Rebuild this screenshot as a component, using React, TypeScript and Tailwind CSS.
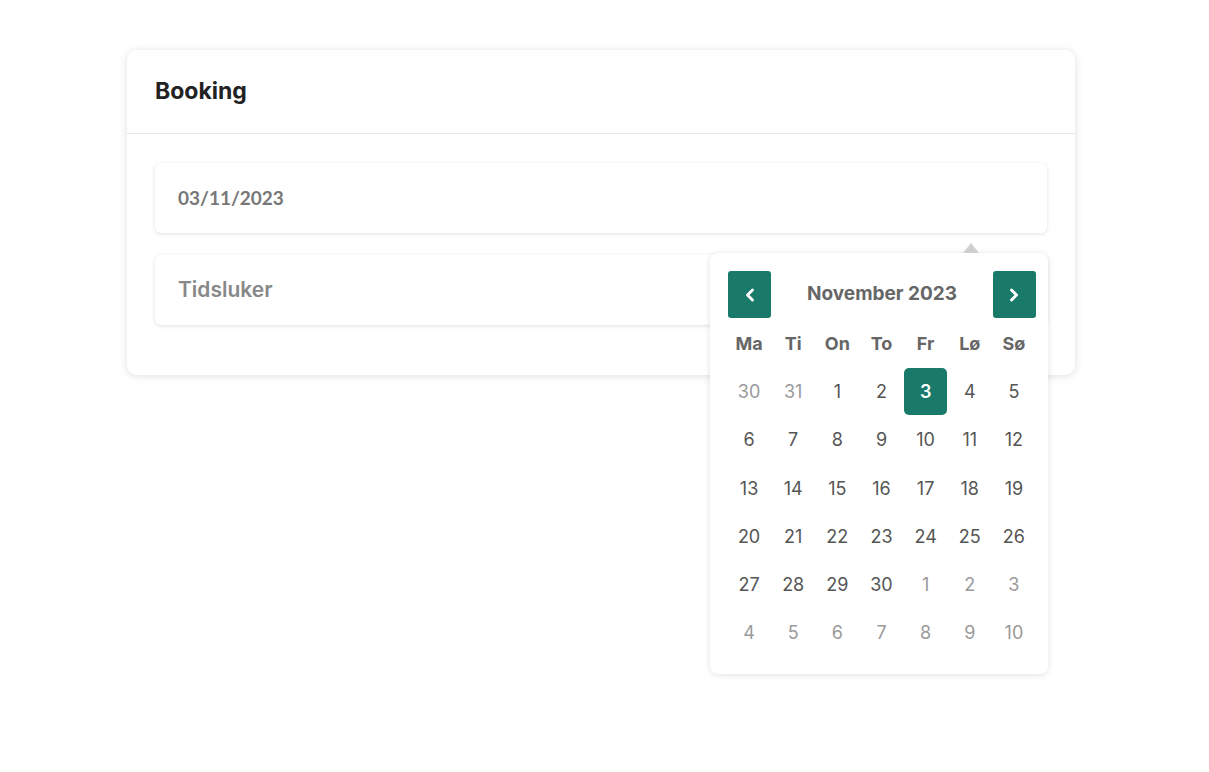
import { ChevronLeft, ChevronRight } from 'lucide-react';

const weekdays = ['Ma', 'Ti', 'On', 'To', 'Fr', 'Lø', 'Sø'];

// 6 weeks shown, first two + last eleven belong to other months
const days: { n: number; muted: boolean }[] = [
  ...[30, 31].map((n) => ({ n, muted: true })),
  ...Array.from({ length: 30 }, (_, i) => ({ n: i + 1, muted: false })),
  ...Array.from({ length: 10 }, (_, i) => ({ n: i + 1, muted: true })),
];

const DatePicker = () => (
  <div className="absolute left-[583px] top-[203px] w-[338px] rounded-lg bg-white pl-[17px] pr-[12px] pt-[18px] pb-[17px] shadow-[0_1px_6px_rgba(0,0,0,0.12)]">
    {/* little arrow pointing at the input */}
    <div className="absolute -top-[10px] left-[253px] h-0 w-0 border-x-[8px] border-b-[10px] border-x-transparent border-b-[#cfcfcf]" />

    <div className="flex items-center justify-between pl-px">
      <button className="flex h-[47px] w-[43px] items-center justify-center rounded-[3px] bg-[#197a69] text-white">
        <ChevronLeft size={20} strokeWidth={3.5} />
      </button>
      <span className="text-[19px] font-bold text-[#666]">November 2023</span>
      <button className="flex h-[47px] w-[43px] items-center justify-center rounded-[3px] bg-[#197a69] text-white">
        <ChevronRight size={20} strokeWidth={3.5} />
      </button>
    </div>

    <div className="grid grid-cols-7 auto-rows-[48.3px] mt-px">
      {weekdays.map((d) => (
        <div key={d} className="flex items-center justify-center text-[18px] font-bold text-[#666]">
          {d}
        </div>
      ))}
      {days.map((d, i) => {
        const selected = !d.muted && d.n === 3;
        return (
          <div key={i} className="flex items-center justify-center">
            <div
              className={
                selected
                  ? 'flex h-[47px] w-[43px] items-center justify-center rounded-[5px] bg-[#197a69] text-[18px] font-semibold text-white'
                  : `flex h-[47px] w-[43px] items-center justify-center text-[18px] ${d.muted ? 'text-[#9a9a9a]' : 'text-[#555]'}`
              }
            >
              {d.n}
            </div>
          </div>
        );
      })}
    </div>
  </div>
);

export default function App() {
  return (
    <div className="min-h-screen bg-white font-['Inter',sans-serif]">
      <div className="relative ml-[127px] mt-[50px] w-[948px] inline-block rounded-[10px] bg-white shadow-[0_1px_8px_rgba(0,0,0,0.13)]">
        <div className="flex h-[84px] items-center border-b border-[#e6e6e6] px-[28px]">
          <h2 className="text-[23px] font-bold text-[#222]">Booking</h2>
        </div>

        <div className="flex flex-col gap-[22px] px-[28px] pt-[29px] pb-[50px]">
          <div className="flex h-[70px] items-center rounded-md bg-white px-[23px] shadow-[0_1px_4px_rgba(0,0,0,0.12)]">
            <span className="font-['Lato',sans-serif] text-[19px] font-bold text-[#777]">03/11/2023</span>
          </div>
          <div className="flex h-[70px] items-center rounded-md bg-white px-[23px] shadow-[0_1px_4px_rgba(0,0,0,0.12)]">
            <span className="text-[21px] font-semibold text-[#888]">Tidsluker</span>
          </div>
        </div>

        <DatePicker />
      </div>
    </div>
  );
}
